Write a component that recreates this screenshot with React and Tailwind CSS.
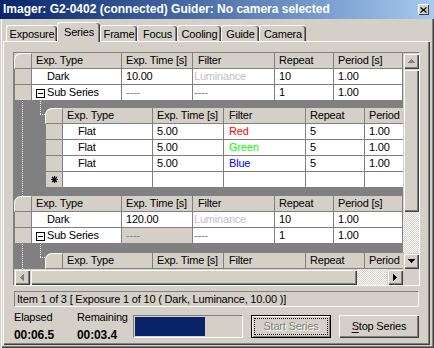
const raised =
  "shadow-[inset_1px_1px_0_#d4d0c8,inset_2px_2px_0_#fff,inset_-1px_-1px_0_#404040,inset_-2px_-2px_0_#808080]";
const dither =
  "bg-[image:repeating-conic-gradient(#fff_0_25%,#d4d0c8_0_50%)] bg-[length:2px_2px]";

function Arrow({ dir, color = "#000" }) {
  const paths = {
    up: "M3 0h1v1h1v1h1v1h1v1H0V3h1V2h1V1h1z",
    down: "M0 0h7v1h-1v1h-1v1h-1v1h-1v-1h-1v-1h-1v-1h-1z",
    left: "M3 0h1v7h-1v-1h-1v-1h-1v-1h-1v-1h1v-1h1v-1h1z",
    right: "M0 0h1v1h1v1h1v1h1v1h-1v1h-1v1h-1v1h-1z",
  };
  const vertical = dir === "up" || dir === "down";
  return (
    <svg width={vertical ? 7 : 4} height={vertical ? 4 : 7} viewBox={vertical ? "0 0 7 4" : "0 0 4 7"}>
      <path d={paths[dir]} fill={color} />
    </svg>
  );
}

function ScrollBtn({ dir, color }) {
  return (
    <div className={`w-[16px] h-[16px] shrink-0 bg-[#d4d0c8] flex items-center justify-center ${raised}`}>
      <Arrow dir={dir} color={color} />
    </div>
  );
}

function Cell({ w, pad = "pl-[4px]", bg = "bg-white", className = "", children }) {
  return (
    <div
      className={`${w} ${pad} ${bg} ${className} h-full shrink-0 border-r border-b border-[#808080] leading-[15px] whitespace-nowrap overflow-hidden`}
    >
      {children}
    </div>
  );
}

function RowHead({ children }) {
  return (
    <div className="w-[18px] shrink-0 h-full bg-[#d4d0c8] border-l border-r border-b border-[#808080] flex items-center justify-center">
      {children}
    </div>
  );
}

function Corner({ light }) {
  return (
    <div className={`w-[18px] shrink-0 h-full ${light ? "bg-[#d4d0c8]" : ""}`}>
      <div className="h-full rounded-tl-[7px] bg-[#d4d0c8] border-t border-l border-white border-r border-b border-r-[#808080] border-b-[#808080]" />
    </div>
  );
}

function HeaderRow({ light, last = "w-[69px]" }) {
  const h = "bg-[#d4d0c8]";
  return (
    <div className="flex h-[16px] shrink-0">
      <Corner light={light} />
      <Cell w="w-[90px]" bg={h}>Exp. Type</Cell>
      <Cell w="w-[71px]" bg={h}>Exp. Time [s]</Cell>
      <Cell w="w-[82px]" bg={h} pad="pl-[5px]">Filter</Cell>
      <Cell w="w-[59px]" bg={h}>Repeat</Cell>
      <Cell w={last} bg={h}>Period [s]</Cell>
    </div>
  );
}

function Expander() {
  return (
    <span className="relative top-px mr-[2px] w-[9px] h-[9px] border border-black bg-white flex items-center justify-center">
      <span className="w-[5px] h-px bg-black" />
    </span>
  );
}

function TopRows({ time, subBg = "bg-white" }) {
  return (
    <>
      <div className="flex h-[16px] shrink-0">
        <RowHead />
        <Cell w="w-[90px]" pad="pl-[15px]">Dark</Cell>
        <Cell w="w-[71px]">{time}</Cell>
        <Cell w="w-[82px]" pad="pl-[1px]" className="text-[#c0c0c0]">Luminance</Cell>
        <Cell w="w-[59px]">10</Cell>
        <Cell w="w-[69px]">1.00</Cell>
      </div>
      <div className="flex h-[16px] shrink-0">
        <RowHead />
        <Cell w="w-[90px]" className="flex items-center">
          <Expander />
          Sub Series
        </Cell>
        <Cell w="w-[71px]" bg={subBg} className="text-[#808080]">----</Cell>
        <Cell w="w-[82px]" pad="pl-[1px]" className="text-[#808080]">----</Cell>
        <Cell w="w-[59px]">1</Cell>
        <Cell w="w-[69px]">1.00</Cell>
      </div>
    </>
  );
}

function FlatRow({ filter, color }) {
  return (
    <div className="flex h-[16px] shrink-0">
      <RowHead />
      <Cell w="w-[90px]" pad="pl-[15px]">Flat</Cell>
      <Cell w="w-[71px]">5.00</Cell>
      <Cell w="w-[82px]" pad="pl-[5px]" className={color}>{filter}</Cell>
      <Cell w="w-[59px]">5</Cell>
      <Cell w="w-[70px]">1.00</Cell>
    </div>
  );
}

function Connectors({ drop }) {
  return (
    <>
      <div className="absolute left-[8px] top-0 bottom-0 border-l border-dotted border-white" />
      <div className={`absolute left-[26px] top-0 ${drop} border-l border-dotted border-white`} />
      <div className="absolute left-[26px] top-[13px] w-[5px] border-t border-dotted border-white" />
    </>
  );
}

function Tab({ label, w, active }) {
  if (active) {
    return (
      <div
        className={`${w} relative z-10 -mb-px h-[20px] bg-[#d4d0c8] border-t border-l border-white rounded-t-[3px] shadow-[inset_-1px_0_0_#404040,inset_-2px_0_0_#808080] flex items-start justify-center pt-[2px] leading-[14px]`}
      >
        {label}
      </div>
    );
  }
  return (
    <div
      className={`${w} h-[16px] border-t border-l border-white rounded-t-[3px] shadow-[inset_-1px_0_0_#404040,inset_-2px_0_0_#808080] flex items-center justify-center leading-[14px]`}
    >
      {label}
    </div>
  );
}

export default function App() {
  return (
    <div className="relative w-[434px] h-[348px] overflow-hidden bg-[#d4d0c8] font-['Liberation_Sans',Arial,sans-serif] text-[11px] text-black tracking-[-0.2px] shadow-[inset_1px_0_0_#d4d0c8,inset_2px_0_0_#fff,inset_-1px_-1px_0_#404040,inset_-2px_-2px_0_#808080]">
      {/* title bar */}
      <div className="flex items-center h-[19px] bg-linear-to-r from-[#0a246a] to-[#a6caf0] pl-[3px] pr-[5px]">
        <div className="flex-1 text-white font-bold text-[12px] tracking-normal leading-[19px] whitespace-nowrap">
          Imager: G2-0402 (connected) Guider: No camera selected
        </div>
        <div className="w-[11px] h-[11px] bg-[#d4d0c8] flex items-center justify-center shadow-[inset_1px_1px_0_#fff,inset_-1px_-1px_0_#404040]">
          <svg width="7" height="6" viewBox="0 0 7 6">
            <path d="M0.5 0.5L6.5 5.5M6.5 0.5L0.5 5.5" stroke="#000" strokeWidth="1.3" />
          </svg>
        </div>
      </div>

      {/* tabs */}
      <div className="flex items-end h-[22px] pl-[6px]">
        <Tab label="Exposure" w="w-[51px]" />
        <Tab label="Series" w="w-[43px]" active />
        <Tab label="Frame" w="w-[37px]" />
        <Tab label="Focus" w="w-[40px]" />
        <Tab label="Cooling" w="w-[44px]" />
        <Tab label="Guide" w="w-[38px]" />
        <Tab label="Camera" w="w-[47px]" />
      </div>

      {/* panel */}
      <div className="relative ml-[3px] w-[427px] h-[304px] shadow-[inset_1px_1px_0_#fff,inset_-1px_-1px_0_#404040,inset_-2px_-2px_0_#808080]">
        <div className="ml-[10px] mt-[11px] inline-block align-top w-[407px] h-[234px] border border-t-[#808080] border-l-[#808080] border-r-white border-b-white">
          <div className="flex h-[216px]">
            <div className="w-[389px] h-full overflow-hidden bg-[#808080] flex flex-col">
              <HeaderRow light />
              <TopRows time="10.00" />
              <div className="relative shrink-0 pt-[7px] pb-[8px] pl-[31px]">
                <Connectors drop="h-[13px]" />
                <div className="w-[390px]">
                  <HeaderRow last="w-[70px]" />
                  <FlatRow filter="Red" color="text-[#ff0000]" />
                  <FlatRow filter="Green" color="text-[#00ff00]" />
                  <FlatRow filter="Blue" color="text-[#0000ff]" />
                  <div className="flex h-[16px] shrink-0">
                    <RowHead>
                      <svg width="7" height="7" viewBox="0 0 7 7">
                        <path d="M3.5 0V7M0 3.5H7M1 1L6 6M6 1L1 6" stroke="#000" strokeWidth="1.2" />
                      </svg>
                    </RowHead>
                    <Cell w="w-[90px]" />
                    <Cell w="w-[71px]" />
                    <Cell w="w-[82px]" />
                    <Cell w="w-[59px]" />
                    <Cell w="w-[70px]" />
                  </div>
                </div>
              </div>
              <HeaderRow />
              <TopRows time="120.00" subBg="bg-[#d4d0c8]" />
              <div className="relative flex-1 pt-[9px] pl-[31px]">
                <Connectors drop="h-[13px]" />
                <div className="w-[390px]">
                  <HeaderRow last="w-[70px]" />
                </div>
              </div>
            </div>
            {/* vertical scrollbar */}
            <div className="w-[16px] h-full flex flex-col">
              <ScrollBtn dir="up" color="#808080" />
              <div className={`h-[143px] shrink-0 bg-[#d4d0c8] ${raised}`} />
              <div className={`flex-1 ${dither}`} />
              <ScrollBtn dir="down" />
            </div>
          </div>
          <div className="flex h-[16px]">
            <div className="w-[389px] flex">
              <ScrollBtn dir="left" color="#808080" />
              <div className={`w-[327px] shrink-0 bg-[#d4d0c8] ${raised}`} />
              <div className={`flex-1 ${dither}`} />
              <ScrollBtn dir="right" />
            </div>
            <div className="w-[16px] bg-[#d4d0c8]" />
          </div>
        </div>

        {/* status */}
        <div className="ml-[11px] mt-[5px] w-[405px] h-[16px] border border-t-[#808080] border-l-[#808080] border-r-white border-b-white pl-[2px] leading-[14px] whitespace-nowrap">
          Item 1 of 3 [ Exposure 1 of 10 ( Dark, Luminance, 10.00 )]
        </div>

        {/* bottom controls */}
        <div className="ml-[11px] mt-[4px] flex items-start">
          <div className="w-[63px] shrink-0">
            <div className="leading-[13px]">Elapsed</div>
            <div className="mt-[4px] font-bold text-[12px] leading-[14px] tracking-[-0.1px]">00:06.5</div>
          </div>
          <div className="w-[56px] shrink-0">
            <div className="leading-[13px]">Remaining</div>
            <div className="mt-[4px] font-bold text-[12px] leading-[14px] tracking-[-0.1px]">00:03.4</div>
          </div>
          <div className="mt-[4px] w-[110px] h-[23px] shrink-0 p-px border border-t-[#808080] border-l-[#808080] border-r-white border-b-white">
            <div className="w-[70px] h-full bg-[#0a246a]" />
          </div>
          <div className="ml-[8px] mt-[4px] w-[80px] h-[23px] shrink-0 border border-black p-[2px] shadow-[inset_1px_1px_0_#fff,inset_-1px_-1px_0_#808080]">
            <div className="w-full h-full border border-dotted border-black flex items-center justify-center text-[#808080] [text-shadow:1px_1px_0_#fff]">
              Start Series
            </div>
          </div>
          <div className="ml-[8px] mt-[4px] w-[80px] h-[23px] shrink-0 flex items-center justify-center shadow-[inset_1px_1px_0_#fff,inset_-1px_-1px_0_#404040,inset_-2px_-2px_0_#808080]">
            <span>
              <span className="underline underline-offset-2">S</span>top Series
            </span>
          </div>
        </div>
      </div>
    </div>
  );
}
